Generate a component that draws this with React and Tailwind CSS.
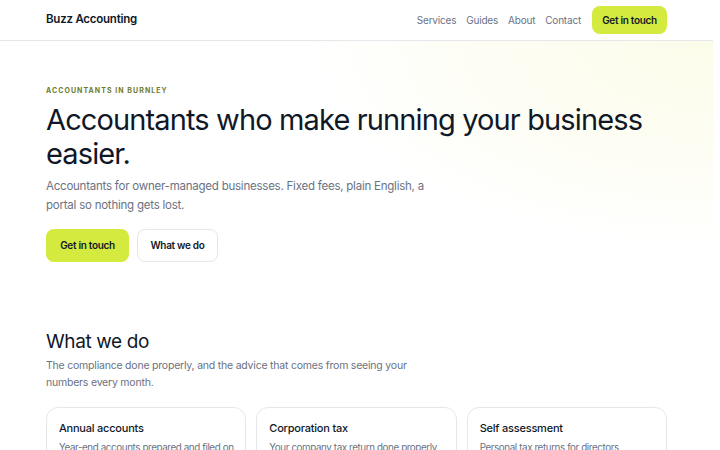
import React from "react";

const navLinks = ["Services", "Guides", "About", "Contact"];

const services = [
  {
    title: "Annual accounts",
    body: "Year-end accounts prepared and filed on time, with no surprises at Companies House.",
  },
  {
    title: "Corporation tax",
    body: "Your company tax return done properly, with every allowance claimed.",
  },
  {
    title: "Self assessment",
    body: "Personal tax returns for directors, landlords and sole traders.",
  },
];

function Header() {
  return (
    <header className="border-b border-gray-200 bg-white">
      <div className="flex h-10 items-center justify-between px-[46px]">
        <a href="#" className="text-[11.5px] font-semibold tracking-[-0.02em] text-gray-900">
          Buzz Accounting
        </a>
        <nav className="flex items-center gap-[10px]">
          {navLinks.map((link) => (
            <a key={link} href="#" className="text-[10px] tracking-[-0.02em] text-gray-500">
              {link}
            </a>
          ))}
          <a
            href="#"
            className="ml-[1px] flex h-7 w-[75px] items-center justify-center rounded-lg bg-[#d4ea3e] text-[10px] font-semibold tracking-[-0.03em] text-gray-900"
          >
            Get in touch
          </a>
        </nav>
      </div>
    </header>
  );
}

function Hero() {
  return (
    <section className="bg-[radial-gradient(ellipse_70%_90%_at_100%_0%,#fbfce9_0%,#fdfdf4_45%,#ffffff_80%)]">
      <div className="px-[46px] pb-[66px] pt-[45px]">
        <p className="text-[7px] font-bold uppercase leading-[9px] tracking-[0.15em] text-[#6e7c2c]">
          Accountants in Burnley
        </p>
        <h1 className="mt-[8px] text-[29px] font-normal leading-[34px] tracking-[-0.03em] text-gray-900">
          Accountants who make running your business easier.
        </h1>
        <p className="mt-[6px] max-w-[390px] text-[11.5px] leading-[19px] tracking-[-0.02em] text-gray-500">
          Accountants for owner-managed businesses. Fixed fees, plain English, a portal so
          nothing gets lost.
        </p>
        <div className="mt-[14px] flex gap-2">
          <a
            href="#"
            className="flex h-[33px] w-[83px] items-center justify-center rounded-lg bg-[#d4ea3e] text-[10px] font-semibold tracking-[-0.03em] text-gray-900"
          >
            Get in touch
          </a>
          <a
            href="#"
            className="flex h-[33px] w-[81px] items-center justify-center rounded-lg border border-gray-200 bg-white text-[10px] font-semibold tracking-[-0.03em] text-gray-900"
          >
            What we do
          </a>
        </div>
      </div>
    </section>
  );
}

function Services() {
  return (
    <section className="bg-white">
      <div className="px-[46px] pb-16">
        <h2 className="text-[19px] font-normal leading-7 tracking-[-0.02em] text-gray-900">
          What we do
        </h2>
        <p className="mt-[1px] max-w-[370px] text-[10.5px] leading-[17px] tracking-[-0.02em] text-gray-500">
          The compliance done properly, and the advice that comes from seeing your numbers
          every month.
        </p>
        <div className="mt-[16px] grid grid-cols-3 gap-[10px]">
          {services.map((s) => (
            <div
              key={s.title}
              className="rounded-xl border border-gray-200 bg-white py-[13px] pl-3 pr-[8px]"
            >
              <h3 className="text-[11px] font-medium leading-[14px] tracking-[-0.02em] text-gray-900">
                {s.title}
              </h3>
              <p className="mt-[5px] text-[9.8px] leading-[15px] tracking-[-0.04em] text-gray-500">
                {s.body}
              </p>
            </div>
          ))}
        </div>
      </div>
    </section>
  );
}

export default function App() {
  return (
    <div className="mr-[7px] min-h-screen bg-white font-['Inter',sans-serif] antialiased">
      <Header />
      <main>
        <Hero />
        <Services />
      </main>
    </div>
  );
}
